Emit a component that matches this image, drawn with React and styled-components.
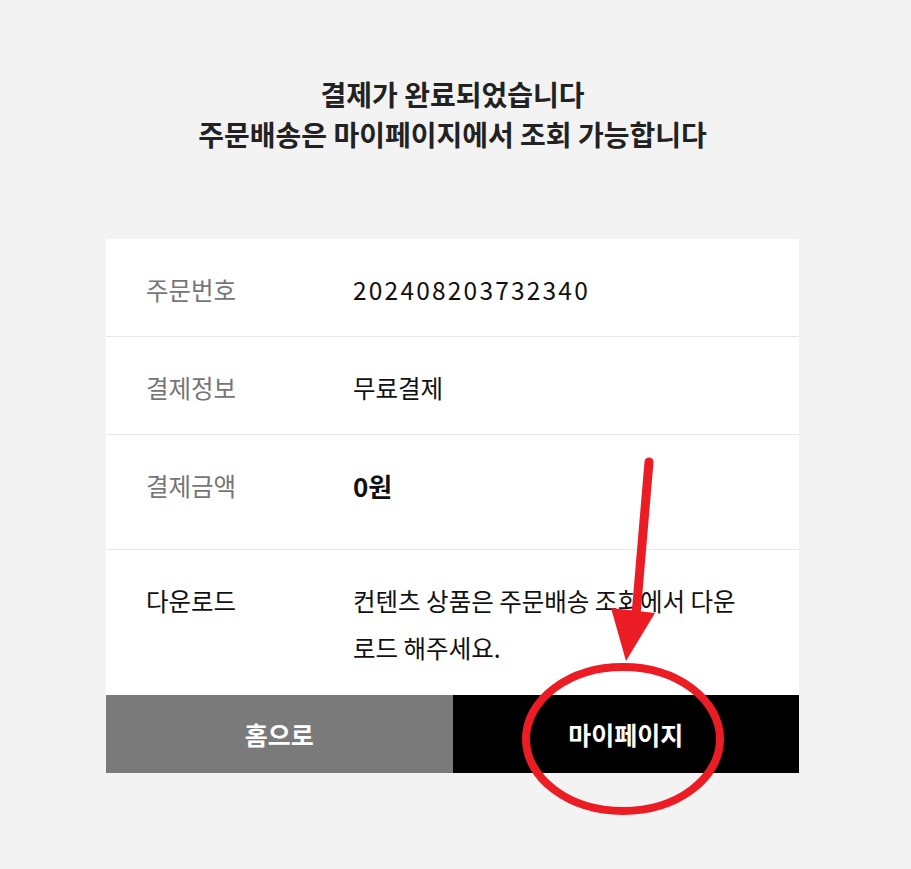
import styled, { createGlobalStyle } from "styled-components";

const GlobalStyle = createGlobalStyle`
  html, body {
    margin: 0;
    padding: 0;
    background: #f3f3f3;
  }
  body {
    font-family: "Noto Sans CJK KR", "Noto Sans", sans-serif;
    color: #111;
  }
`;

const rows = [
  { label: "주문번호", value: "202408203732340", muted: true, digits: true },
  { label: "결제정보", value: "무료결제", muted: true },
  { label: "결제금액", value: "0원", muted: true, bold: true, tall: true },
  { label: "다운로드", value: "컨텐츠 상품은 주문배송 조회에서 다운로드 해주세요." },
];

export default function App() {
  return (
    <Page>
      <GlobalStyle />
      <Title>
        결제가 완료되었습니다
        <br />
        주문배송은 마이페이지에서 조회 가능합니다
      </Title>

      <Card>
        {rows.map((r) => (
          <Row key={r.label} tall={r.tall}>
            <Label muted={r.muted}>{r.label}</Label>
            <Value bold={r.bold} digits={r.digits}>
              {r.value}
            </Value>
          </Row>
        ))}
        <Buttons>
          <Button kind="home">홈으로</Button>
          <Button kind="mypage">마이페이지</Button>
        </Buttons>
      </Card>

      <Annotation width="911" height="869" viewBox="0 0 911 869">
        <line
          x1="649"
          y1="462"
          x2="636"
          y2="615"
          stroke="#ec1c24"
          strokeWidth="9"
          strokeLinecap="round"
        />
        <polygon points="611,608 655,613 626,661" fill="#ec1c24" />
        <ellipse
          cx="623"
          cy="739"
          rx="97"
          ry="72"
          fill="none"
          stroke="#ec1c24"
          strokeWidth="8"
        />
      </Annotation>
    </Page>
  );
}

const Page = styled.div`
  position: relative;
  min-height: 869px;
  padding: 74px 6px 0 0;
  box-sizing: border-box;
`;

const Title = styled.h1`
  margin: 0 0 85px;
  text-align: center;
  font-size: 28px;
  line-height: 40px;
  font-weight: 700;
  color: #222;
`;

const Card = styled.div`
  width: 693px;
  margin: 0 auto;
  background: #fff;
`;

const Row = styled.div`
  display: grid;
  grid-template-columns: 207px 1fr;
  padding: 27px 40px ${(p) => (p.tall ? "40px" : "23px")};
  border-bottom: 1px solid #e6e6e6;
  font-size: 24.5px;
  line-height: 47px;

  &:nth-last-child(2) {
    border-bottom: none;
    padding-bottom: 24px;
  }
`;

const Label = styled.div`
  color: ${(p) => (p.muted ? "#767676" : "#111")};
`;

const Value = styled.div`
  max-width: 400px;
  color: #111;
  font-weight: ${(p) => (p.bold ? 700 : 400)};
  font-size: ${(p) => (p.bold ? "26px" : "inherit")};
  letter-spacing: ${(p) => (p.digits ? "2.2px" : "0")};
`;

const Buttons = styled.div`
  display: grid;
  grid-template-columns: 1fr 1fr;
  height: 78px;
`;

const Button = styled.button`
  border: none;
  margin: 0;
  font-family: inherit;
  font-size: 25px;
  font-weight: 700;
  color: #fff;
  background: ${(p) => (p.kind === "home" ? "#7a7a7a" : "#000")};
  cursor: pointer;
`;

const Annotation = styled.svg`
  position: absolute;
  top: 0;
  left: 0;
  pointer-events: none;
`;
